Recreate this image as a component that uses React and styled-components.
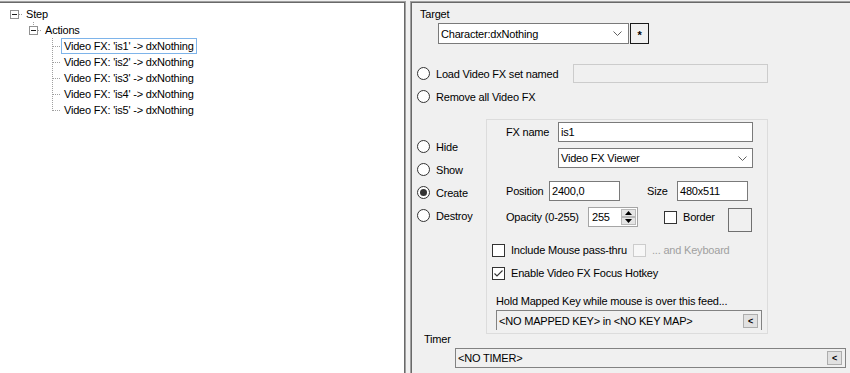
import styled, { createGlobalStyle } from "styled-components"

const GlobalStyle = createGlobalStyle`
    html, body {
        margin: 0;
        padding: 0;
        background: #f0f0f0;
    }
    body {
        font-family: "Liberation Sans", Arial, sans-serif;
        font-size: 11px;
        letter-spacing: -0.2px;
        color: #000;
    }
`

const Window = styled.div`
    display: flex;
    width: 850px;
    height: 373px;
    padding-top: 1px;
    box-sizing: border-box;
    overflow: hidden;
`

/* ---------- tree ---------- */

const TreePane = styled.div`
    width: 406px;
    flex-shrink: 0;
    box-sizing: border-box;
    padding-top: 4px;
    background: #fff;
    border-top: 1px solid #a0a0a0;
    border-right: 1px solid #a0a0a0;
    box-shadow: inset 0 1px 0 #696969, inset -1px 0 0 #696969;
`

const TreeRow = styled.div`
    display: flex;
    height: 16px;
    padding-left: ${p => 4 + p.$level * 19}px;
`

const Gutter = styled.svg`
    width: 19px;
    height: 16px;
    flex-shrink: 0;
    display: block;
`

const NodeLabel = styled.div`
    height: 16px;
    box-sizing: border-box;
    padding: 0 2px;
    line-height: 14px;
    white-space: nowrap;
    border: 1px solid ${p => (p.$selected ? "#7eb4ea" : "transparent")};
`

function Connector({ kind }) {
    const dot = { stroke: "#a0a0a0", strokeWidth: 1, strokeDasharray: "1 1" }
    const hasBox = kind === "root" || kind === "branch"
    return (
        <Gutter viewBox="0 0 19 16">
            {kind === "branch" && <line x1="10.5" y1="0" x2="10.5" y2="4" {...dot} />}
            {kind === "leaf" && <line x1="10.5" y1="0" x2="10.5" y2="16" {...dot} />}
            {kind === "last" && <line x1="10.5" y1="0" x2="10.5" y2="9" {...dot} />}
            {hasBox ? (
                <>
                    <line x1="15" y1="8.5" x2="19" y2="8.5" {...dot} />
                    <rect x="6.5" y="4.5" width="8" height="8" fill="#fff" stroke="#919191" />
                    <line x1="8" y1="8.5" x2="13" y2="8.5" stroke="#1e1e1e" />
                </>
            ) : (
                <line x1="11" y1="8.5" x2="19" y2="8.5" {...dot} />
            )}
        </Gutter>
    )
}

const nodes = [
    { level: 0, kind: "root", text: "Step" },
    { level: 1, kind: "branch", text: "Actions" },
    { level: 2, kind: "leaf", text: "Video FX: 'is1' -> dxNothing", selected: true },
    { level: 2, kind: "leaf", text: "Video FX: 'is2' -> dxNothing" },
    { level: 2, kind: "leaf", text: "Video FX: 'is3' -> dxNothing" },
    { level: 2, kind: "leaf", text: "Video FX: 'is4' -> dxNothing" },
    { level: 2, kind: "last", text: "Video FX: 'is5' -> dxNothing" },
]

/* ---------- form ---------- */

const FormPane = styled.div`
    flex: 1;
    margin-left: 4px;
    padding-top: 6px;
    display: flex;
    flex-direction: column;
    align-items: flex-start;
    border-top: 1px solid #a0a0a0;
    border-left: 1px solid #a0a0a0;
    box-shadow: inset 0 1px 0 #696969, inset 1px 0 0 #696969;
`

const FieldLabel = styled.div`
    height: ${p => p.$lh || 13}px;
    line-height: ${p => p.$lh || 13}px;
    margin-top: ${p => p.$top || 0}px;
    margin-left: ${p => p.$left || 0}px;
    white-space: nowrap;
`

const Row = styled.div`
    display: flex;
    align-items: center;
    height: ${p => p.$h || 20}px;
    margin-top: ${p => p.$top || 0}px;
    margin-left: ${p => p.$left || 0}px;
    width: ${p => (p.$width ? p.$width + "px" : "auto")};
`

const InlineLabel = styled.span`
    width: ${p => p.$width}px;
    flex-shrink: 0;
    white-space: nowrap;
    margin-left: ${p => p.$left || 0}px;
`

const TextBox = styled.div`
    width: ${p => p.$width}px;
    height: ${p => p.$h || 20}px;
    box-sizing: border-box;
    flex-shrink: 0;
    margin-left: ${p => p.$left || 0};
    padding-left: 2px;
    line-height: ${p => (p.$h || 20) - 2}px;
    background: ${p => (p.$disabled ? "#f0f0f0" : "#fff")};
    border: 1px solid ${p => (p.$disabled ? "#cccccc" : "#7a7a7a")};
    white-space: nowrap;
`

const ComboBox = styled.div`
    width: ${p => p.$width}px;
    height: ${p => p.$h || 20}px;
    box-sizing: border-box;
    flex-shrink: 0;
    display: flex;
    align-items: center;
    justify-content: space-between;
    padding: 0 ${p => p.$pad || 5}px 0 2px;
    background: #fff;
    border: 1px solid #7a7a7a;
    white-space: nowrap;
`

const Chevron = () => (
    <svg width="9" height="5" viewBox="0 0 9 5">
        <polyline points="0.5,0.5 4.5,4.5 8.5,0.5" fill="none" stroke="#606060" />
    </svg>
)

const StarButton = styled.div`
    width: 19px;
    height: 21px;
    box-sizing: border-box;
    margin-left: 1px;
    border: 1px solid #1a1a1a;
    background: #f0f0f0;
    display: flex;
    align-items: center;
    justify-content: center;
    font-weight: bold;
    font-size: 11px;
    padding-top: 3px;
`

const RadioRow = styled.div`
    display: flex;
    align-items: center;
    gap: 6px;
    height: ${p => p.$h || 19}px;
    margin-top: ${p => p.$top || 0}px;
    margin-left: ${p => p.$left || 0}px;
    width: ${p => (p.$width ? p.$width + "px" : "auto")};
`

const Radio = styled.span`
    width: 13px;
    height: 13px;
    box-sizing: border-box;
    flex-shrink: 0;
    border: 1px solid #333;
    border-radius: 50%;
    background: #fff;
    display: flex;
    align-items: center;
    justify-content: center;

    &::after {
        content: "";
        width: 7px;
        height: 7px;
        border-radius: 50%;
        background: ${p => (p.$checked ? "#333" : "transparent")};
    }
`

const MainArea = styled.div`
    display: flex;
    margin-top: 13px;
    margin-left: 6px;
`

const ModeColumn = styled.div`
    width: 69px;
    padding-top: 16px;
    display: flex;
    flex-direction: column;
`

const GroupBox = styled.div`
    width: 282px;
    height: 215px;
    box-sizing: border-box;
    border: 1px solid #dcdcdc;
    overflow: hidden;
    display: flex;
    flex-direction: column;
    align-items: flex-start;
`

const CheckItem = styled.div`
    display: flex;
    align-items: center;
    gap: 6px;
    flex-shrink: 0;
    width: ${p => (p.$width ? p.$width + "px" : "auto")};
    margin-left: ${p => p.$left || 0}px;
    color: ${p => (p.$disabled ? "#a0a0a0" : "#000")};
    white-space: nowrap;
`

const CheckBox = styled.span`
    width: 13px;
    height: 13px;
    box-sizing: border-box;
    flex-shrink: 0;
    border: 1px solid ${p => (p.$disabled ? "#cccccc" : "#333")};
    background: ${p => (p.$disabled ? "#f7f7f7" : "#fff")};
    display: flex;
    align-items: center;
    justify-content: center;
`

const SpinBox = styled.div`
    width: 50px;
    height: 20px;
    box-sizing: border-box;
    flex-shrink: 0;
    display: flex;
    padding: 1px;
    background: #fff;
    border: 1px solid #a5a5a5;
`

const SpinText = styled.div`
    flex: 1;
    padding-left: 2px;
    line-height: 16px;
`

const SpinButtons = styled.div`
    width: 15px;
    display: flex;
    flex-direction: column;
`

const SpinButton = styled.div`
    flex: 1;
    display: flex;
    align-items: center;
    justify-content: center;
    background: #e5e5e5;
    border: 1px solid #b9b9b9;
    box-sizing: border-box;
`

const Swatch = styled.div`
    width: 24px;
    height: 24px;
    box-sizing: border-box;
    flex-shrink: 0;
    align-self: flex-start;
    margin-top: 1px;
    border: 1px solid #707070;
    background: #f0f0f0;
`

const KeyBox = styled.div`
    width: ${p => p.$width}px;
    height: 20px;
    box-sizing: border-box;
    flex-shrink: 0;
    display: flex;
    align-items: center;
    justify-content: space-between;
    margin-top: ${p => p.$top || 0}px;
    margin-left: ${p => p.$left || 0}px;
    padding: 0 3px 0 2px;
    background: #f0f0f0;
    border: 1px solid #828282;
    border-bottom: ${p => (p.$open ? "none" : "1px solid #828282")};
    white-space: nowrap;
`

const SmallButton = styled.div`
    width: 15px;
    height: 14px;
    box-sizing: border-box;
    display: flex;
    align-items: center;
    justify-content: center;
    background: #e1e1e1;
    border: 1px solid #adadad;
    font-size: 9px;
    font-weight: bold;
    line-height: 12px;
`

const Tick = () => (
    <svg width="11" height="11" viewBox="0 0 11 11">
        <polyline points="1.5,5.5 4,8 9.5,2.5" fill="none" stroke="#333" strokeWidth="1.1" />
    </svg>
)

const Arrow = ({ up }) => (
    <svg width="7" height="4" viewBox="0 0 7 4">
        <polygon points={up ? "3.5,0 7,4 0,4" : "0,0 7,0 3.5,4"} fill="#000" />
    </svg>
)

const modes = ["Hide", "Show", "Create", "Destroy"]

export default function App() {
    return (
        <Window>
            <GlobalStyle />
            <TreePane>
                {nodes.map(n => (
                    <TreeRow key={n.text} $level={n.level}>
                        <Connector kind={n.kind} />
                        <NodeLabel $selected={n.selected}>{n.text}</NodeLabel>
                    </TreeRow>
                ))}
            </TreePane>

            <FormPane>
                <FieldLabel $left={9}>Target</FieldLabel>
                <Row $top={2} $left={27} $h={21}>
                    <ComboBox $width={191} $h={21} $pad={6}>
                        <span>Character:dxNothing</span>
                        <Chevron />
                    </ComboBox>
                    <StarButton>*</StarButton>
                </Row>

                <RadioRow $top={20} $left={6} $width={351}>
                    <Radio />
                    <span>Load Video FX set named</span>
                    <TextBox $width={195} $h={19} $left="auto" $disabled />
                </RadioRow>
                <RadioRow $top={4} $left={6}>
                    <Radio />
                    <span>Remove all Video FX</span>
                </RadioRow>

                <MainArea>
                    <ModeColumn>
                        {modes.map(m => (
                            <RadioRow key={m} $h={23}>
                                <Radio $checked={m === "Create"} />
                                <span>{m}</span>
                            </RadioRow>
                        ))}
                    </ModeColumn>

                    <GroupBox>
                        <Row $top={2} $left={19}>
                            <InlineLabel $width={52}>FX name</InlineLabel>
                            <TextBox $width={195}>is1</TextBox>
                        </Row>
                        <Row $top={6} $left={71}>
                            <ComboBox $width={195}>
                                <span>Video FX Viewer</span>
                                <Chevron />
                            </ComboBox>
                        </Row>
                        <Row $top={13} $left={19}>
                            <InlineLabel $width={43}>Position</InlineLabel>
                            <TextBox $width={71}>2400,0</TextBox>
                            <InlineLabel $width={30} $left={27}>Size</InlineLabel>
                            <TextBox $width={71}>480x511</TextBox>
                        </Row>
                        <Row $top={6} $left={19}>
                            <InlineLabel $width={82}>Opacity (0-255)</InlineLabel>
                            <SpinBox>
                                <SpinText>255</SpinText>
                                <SpinButtons>
                                    <SpinButton><Arrow up /></SpinButton>
                                    <SpinButton><Arrow /></SpinButton>
                                </SpinButtons>
                            </SpinBox>
                            <CheckItem $width={64} $left={26}>
                                <CheckBox />
                                <span>Border</span>
                            </CheckItem>
                            <Swatch />
                        </Row>
                        <Row $top={15} $left={5} $h={16}>
                            <CheckItem $width={141}>
                                <CheckBox />
                                <span>Include Mouse pass-thru</span>
                            </CheckItem>
                            <CheckItem $disabled>
                                <CheckBox $disabled />
                                <span>... and Keyboard</span>
                            </CheckItem>
                        </Row>
                        <Row $top={7} $left={5} $h={16}>
                            <CheckItem>
                                <CheckBox><Tick /></CheckBox>
                                <span>Enable Video FX Focus Hotkey</span>
                            </CheckItem>
                        </Row>
                        <FieldLabel $top={14} $left={9}>Hold Mapped Key while mouse is over this feed...</FieldLabel>
                        <KeyBox $top={2} $left={9} $width={266} $open>
                            <span>&lt;NO MAPPED KEY&gt; in &lt;NO KEY MAP&gt;</span>
                            <SmallButton>&lt;</SmallButton>
                        </KeyBox>
                    </GroupBox>
                </MainArea>

                <FieldLabel $left={13} $lh={11}>Timer</FieldLabel>
                <KeyBox $top={3} $left={44} $width={391}>
                    <span>&lt;NO TIMER&gt;</span>
                    <SmallButton>&lt;</SmallButton>
                </KeyBox>
            </FormPane>
        </Window>
    )
}
